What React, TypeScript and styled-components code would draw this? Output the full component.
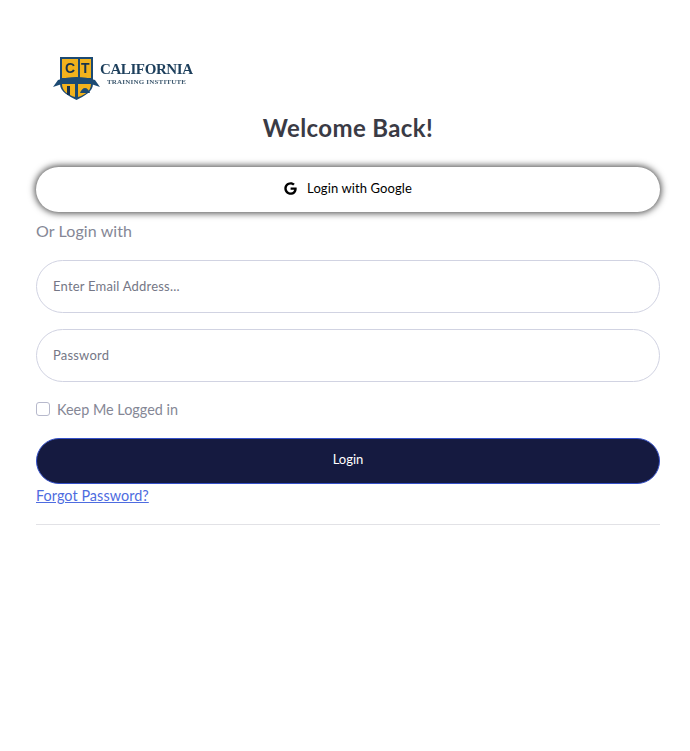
import React from "react";
import styled, { createGlobalStyle } from "styled-components";
import { FaGoogle } from "react-icons/fa";

const GlobalStyle = createGlobalStyle`
  body {
    margin: 0;
    background: #fff;
    font-family: "Lato", "Open Sans", sans-serif;
  }
`;

const Logo = () => (
  <svg width="146" height="50" viewBox="0 0 146 50">
    <path d="M8 5h33v27c0 8-9 12-16.500 16C17 44 8 40 8 32z" fill="#1c4a73" />
    <rect x="10" y="7" width="16" height="19" fill="#f2b21c" />
    <rect x="28" y="7" width="11" height="19" fill="#f2b21c" />
    <path d="M10 32h13v13c-7-2-13-6-13-13z" fill="#f2b21c" />
    <path d="M26 32h13c0 7-6 11-13 13z" fill="#f2b21c" />
    <path d="M1 35l5-7c11-4 26-4 37 0l5 7-6-2c-10-4-25-4-35 0z" fill="#1c4a73" />
    <path d="M28 41c1-3 3-5 5-5s4 2 5 5z" fill="#1c4a73" />
    <rect x="15" y="34" width="3" height="9" fill="#17324d" />
    <text x="13" y="21" fontFamily="Liberation Sans" fontWeight="700" fontSize="14" fill="#17324d">C</text>
    <text x="29" y="21" fontFamily="Liberation Sans" fontWeight="700" fontSize="14" fill="#17324d">T</text>
    <text x="48" y="22" fontFamily="Liberation Serif" fontWeight="700" fontSize="15" fill="#1d3f5c" textLength="93">CALIFORNIA</text>
    <text x="55" y="31.500" fontFamily="Liberation Serif" fontWeight="700" fontSize="7" fill="#3f5a70" textLength="79">TRAINING INSTITUTE</text>
  </svg>
);

const App = () => {
  return (
    <Page>
      <GlobalStyle />
      <LogoRow>
        <Logo />
      </LogoRow>
      <Title>Welcome Back!</Title>
      <GoogleButton type="button">
        <FaGoogle size={13} />
        Login with Google
      </GoogleButton>
      <OrText>Or Login with</OrText>
      <Form>
        <Input placeholder="Enter Email Address..." />
        <Input placeholder="Password" />
        <CheckRow>
          <Check />
          Keep Me Logged in
        </CheckRow>
        <LoginButton type="button">Login</LoginButton>
      </Form>
      <Forgot href="#">Forgot Password?</Forgot>
      <Divider />
    </Page>
  );
};

export default App;

const Page = styled.div`
  display: flex;
  flex-direction: column;
  padding: 52px 30px 0 36px;
  height: 699px;
`;

const LogoRow = styled.div`
  display: flex;
  padding-left: 16px;
  height: 50px;

  svg {
    filter: blur(0.4px);
  }
`;

const Title = styled.h1`
  margin: 11px 0 0;
  text-align: center;
  font-size: 24px;
  line-height: 29px;
  font-weight: 700;
  letter-spacing: 0.38px;
  color: #3a3b45;
`;

const GoogleButton = styled.button`
  display: flex;
  align-items: center;
  justify-content: center;
  gap: 10px;
  margin-top: 25px;
  padding: 0 0 3px;
  height: 45px;
  border: none;
  border-radius: 23px;
  background: #fff;
  color: #000;
  font-family: inherit;
  font-size: 13px;
  letter-spacing: 0.1px;
  box-shadow: 0 0 7px 1px rgba(0, 0, 0, 0.75);
`;

const OrText = styled.div`
  margin-top: 8px;
  font-size: 16px;
  line-height: 22px;
  letter-spacing: 0.1px;
  color: #858796;
`;

const Form = styled.form`
  display: flex;
  flex-direction: column;
  margin-top: 18px;
`;

const Input = styled.input`
  box-sizing: border-box;
  height: 53px;
  margin-bottom: 16px;
  padding: 0 16px 2px;
  border: 1px solid #d1d3e2;
  border-radius: 27px;
  background: #fff;
  font-family: inherit;
  font-size: 13px;
  letter-spacing: 0.2px;
  color: #6e707e;
  outline: none;

  &::placeholder {
    color: #757786;
    opacity: 1;
  }
`;

const CheckRow = styled.label`
  display: flex;
  align-items: center;
  gap: 7px;
  margin-top: 1px;
  height: 20px;
  font-size: 14.4px;
  color: #858796;
`;

const Check = styled.span`
  box-sizing: border-box;
  width: 14px;
  height: 14px;
  border: 1px solid #b7b9cc;
  border-radius: 3px;
  background: #fff;
`;

const LoginButton = styled.button`
  margin-top: 19px;
  padding: 0 0 4px;
  height: 46px;
  border: 1px solid #3550c8;
  border-radius: 23px;
  background: #151a40;
  color: #fff;
  font-family: inherit;
  font-size: 13px;
`;

const Forgot = styled.a`
  align-self: flex-start;
  margin-top: 2px;
  font-size: 14.4px;
  line-height: 20px;
  letter-spacing: 0.06px;
  color: #4e6ce0;
`;

const Divider = styled.hr`
  width: 100%;
  margin: 18px 0 0;
  border: none;
  border-top: 1px solid #e2e2e6;
`;
